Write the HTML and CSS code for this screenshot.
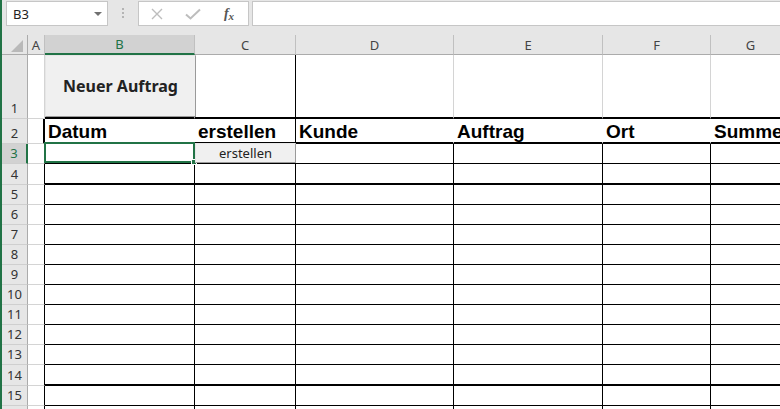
FILE: index.html
```html
<!DOCTYPE html>
<html lang="de">
<head>
    <meta charset="UTF-8">
    <title>Aufträge</title>
    <link rel="stylesheet" href="styles.css">
</head>
<body>
<div class="excel">

    <!-- Name box + formula bar -->
    <div class="formula-bar">
        <div class="name-box">
            <span>B3</span>
            <span class="dropdown"></span>
        </div>
        <div class="grip">
            <svg width="3" height="11" viewBox="0 0 3 11"><rect x="0" y="0" width="2" height="2"/><rect x="0" y="4" width="2" height="2"/><rect x="0" y="8" width="2" height="2"/></svg>
        </div>
        <div class="fx-box">
            <span class="fx-btn">
                <svg width="12" height="12" viewBox="0 0 12 12"><path d="M1 1 L11 11 M11 1 L1 11" stroke="#bdbdbd" stroke-width="1.4" fill="none"/></svg>
            </span>
            <span class="fx-btn">
                <svg width="16" height="12" viewBox="0 0 16 12"><path d="M1 6.5 L5.5 10.5 L15 1.5" stroke="#bdbdbd" stroke-width="2" fill="none"/></svg>
            </span>
            <span class="fx-btn fx">f<span class="fx-x">x</span></span>
        </div>
        <div class="formula-input"></div>
    </div>

    <div class="sheet">
        <div class="row col-heads">
            <div class="corner">
                <svg width="12" height="12" viewBox="0 0 12 12"><path d="M0 12 L12 0 L12 12 Z" fill="#b9b9b9"/></svg>
            </div>
            <div>A</div>
            <div class="sel">B</div>
            <div>C</div>
            <div>D</div>
            <div>E</div>
            <div>F</div>
            <div>G</div>
        </div>

        <div class="row r1">
            <div class="rh">1</div>
            <div class="a"></div>
            <div class="c"><button class="form-btn big">Neuer Auftrag</button></div>
            <div class="c edge"></div>
            <div class="c"></div>
            <div class="c"></div>
            <div class="c"></div>
            <div class="c"></div>
        </div>

        <div class="row r2">
            <div class="rh">2</div>
            <div class="a"></div>
            <div class="c">Datum</div>
            <div class="c edge">erstellen</div>
            <div class="c">Kunde</div>
            <div class="c">Auftrag</div>
            <div class="c">Ort</div>
            <div class="c">Summe</div>
        </div>

        <div class="row tbl">
            <div class="rh sel">3</div>
            <div class="a"></div>
            <div class="c"><div class="sel-box"></div></div>
            <div class="c"><button class="form-btn small">erstellen</button></div>
            <div class="c"></div>
            <div class="c"></div>
            <div class="c"></div>
            <div class="c"></div>
        </div>

        <div class="row tbl thick">
            <div class="rh">4</div><div class="a"></div>
            <div class="c"></div><div class="c"></div><div class="c"></div><div class="c"></div><div class="c"></div><div class="c"></div>
        </div>
        <div class="row tbl">
            <div class="rh">5</div><div class="a"></div>
            <div class="c"></div><div class="c"></div><div class="c"></div><div class="c"></div><div class="c"></div><div class="c"></div>
        </div>
        <div class="row tbl">
            <div class="rh">6</div><div class="a"></div>
            <div class="c"></div><div class="c"></div><div class="c"></div><div class="c"></div><div class="c"></div><div class="c"></div>
        </div>
        <div class="row tbl">
            <div class="rh">7</div><div class="a"></div>
            <div class="c"></div><div class="c"></div><div class="c"></div><div class="c"></div><div class="c"></div><div class="c"></div>
        </div>
        <div class="row tbl">
            <div class="rh">8</div><div class="a"></div>
            <div class="c"></div><div class="c"></div><div class="c"></div><div class="c"></div><div class="c"></div><div class="c"></div>
        </div>
        <div class="row tbl">
            <div class="rh">9</div><div class="a"></div>
            <div class="c"></div><div class="c"></div><div class="c"></div><div class="c"></div><div class="c"></div><div class="c"></div>
        </div>
        <div class="row tbl">
            <div class="rh">10</div><div class="a"></div>
            <div class="c"></div><div class="c"></div><div class="c"></div><div class="c"></div><div class="c"></div><div class="c"></div>
        </div>
        <div class="row tbl">
            <div class="rh">11</div><div class="a"></div>
            <div class="c"></div><div class="c"></div><div class="c"></div><div class="c"></div><div class="c"></div><div class="c"></div>
        </div>
        <div class="row tbl">
            <div class="rh">12</div><div class="a"></div>
            <div class="c"></div><div class="c"></div><div class="c"></div><div class="c"></div><div class="c"></div><div class="c"></div>
        </div>
        <div class="row tbl">
            <div class="rh">13</div><div class="a"></div>
            <div class="c"></div><div class="c"></div><div class="c"></div><div class="c"></div><div class="c"></div><div class="c"></div>
        </div>
        <div class="row tbl thick">
            <div class="rh">14</div><div class="a"></div>
            <div class="c"></div><div class="c"></div><div class="c"></div><div class="c"></div><div class="c"></div><div class="c"></div>
        </div>
        <div class="row tbl">
            <div class="rh">15</div><div class="a"></div>
            <div class="c"></div><div class="c"></div><div class="c"></div><div class="c"></div><div class="c"></div><div class="c"></div>
        </div>
        <!-- row 16 only peeks in at the bottom edge -->
        <div class="row tbl">
            <div class="rh"></div><div class="a"></div>
            <div class="c"></div><div class="c"></div><div class="c"></div><div class="c"></div><div class="c"></div><div class="c"></div>
        </div>
    </div>
</div>
</body>
</html>
```

FILE: styles.css
```css
body {
    margin: 0;
    font-family: "Noto Sans", "Open Sans", sans-serif;
    color: #333;
}

.excel {
    width: 780px;
    height: 409px;
    overflow: hidden;
    background-color: #e6e6e6;
    border-left: 2px solid #217346;
    box-sizing: border-box;
}

/* Formula bar */
.formula-bar {
    height: 35px;
    padding-top: 1px;
    box-sizing: border-box;
    display: flex;
    align-items: flex-start;
}

.name-box {
    margin-left: 4px;
    width: 102px;
    height: 25px;
    box-sizing: border-box;
    border: 1px solid #c6c6c6;
    background-color: #fff;
    display: flex;
    align-items: center;
    justify-content: space-between;
    padding: 0 5px 0 6px;
    font-size: 13px;
    color: #222;
}

.dropdown {
    width: 0;
    height: 0;
    border-left: 4px solid transparent;
    border-right: 4px solid transparent;
    border-top: 4px solid #707070;
}

.grip {
    width: 30px;
    height: 25px;
    display: flex;
    align-items: center;
    justify-content: center;
    fill: #b4b4b4;
}

.fx-box {
    width: 111px;
    height: 25px;
    box-sizing: border-box;
    border: 1px solid #c6c6c6;
    background-color: #fff;
    display: flex;
}

.fx-btn {
    width: 36px;
    display: flex;
    align-items: center;
    justify-content: center;
}

.fx {
    font-family: "Liberation Serif", serif;
    font-style: italic;
    font-weight: bold;
    font-size: 14px;
    color: #555;
}

.fx-x {
    font-size: 11px;
    position: relative;
    top: 2px;
}

.formula-input {
    flex: 1;
    margin-left: 3px;
    height: 25px;
    box-sizing: border-box;
    border: 1px solid #c6c6c6;
    border-right: none;
    background-color: #fff;
}

/* Grid */
.row {
    display: grid;
    grid-template-columns: 26px 17px 150px 101px 158px 149px 108px 80px;
    height: 20px;
}

.row > div {
    box-sizing: border-box;
    border-right: 1px solid #d4d4d4;
    border-bottom: 1px solid #d4d4d4;
    background-color: #fff;
    position: relative;
    white-space: nowrap;
}

.col-heads > div {
    background-color: #e6e6e6;
    border-right-color: #c0c0c0;
    border-bottom-color: #ababab;
    font-size: 13px;
    color: #444;
    display: flex;
    align-items: center;
    justify-content: center;
}

.col-heads > .corner {
    border-right-color: #ababab;
    justify-content: flex-end;
    align-items: flex-end;
    padding: 0 4px 2px 0;
}

.col-heads > .sel {
    background-color: #d2d2d2;
    color: #217346;
    border-bottom: 2px solid #217346;
}

.row > .rh {
    background-color: #e6e6e6;
    border-right-color: #ababab;
    border-bottom-color: #cfcfcf;
    font-size: 13px;
    line-height: 13px;
    color: #333;
    display: flex;
    align-items: flex-end;
    justify-content: center;
    padding-bottom: 3px;
}

.row > .rh.sel {
    background-color: #d2d2d2;
    color: #217346;
    border-right: 2px solid #217346;
}

/* Row heights */
.r1 { height: 64px; }
.r2 { height: 25px; }
.thick { height: 21px; }

/* Table borders */
.r1 > .c { border-bottom: 2px solid #000; }
.r1 > .edge { border-right-color: #000; }

.r2 > .a { border-right: 2px solid #000; }
.r2 > .c {
    border-bottom: 2px solid #000;
    border-right-color: #fff;
    font-family: "Liberation Sans", Arial, sans-serif;
    font-weight: bold;
    font-size: 19px;
    line-height: 19px;
    color: #000;
    display: flex;
    align-items: flex-end;
    padding: 0 0 1px 3px;
}
.r2 > .edge { border-right-color: #000; }

.tbl > .a { border-right-color: #000; }
.tbl > .c {
    border-right-color: #000;
    border-bottom-color: #000;
}
.tbl.thick > .c { border-bottom-width: 2px; }

/* Form buttons lying over cells */
.form-btn {
    position: absolute;
    left: 0;
    margin: 0;
    padding: 0;
    box-sizing: border-box;
    background-color: #f0f0f0;
    border: 1px solid;
    border-color: #e6e6e6 #9a9a9a #9a9a9a #e6e6e6;
    font-family: "Noto Sans", "Open Sans", sans-serif;
    color: #222;
    z-index: 2;
}

.form-btn.big {
    top: 0;
    width: 151px;
    height: 62px;
    font-size: 16px;
    font-weight: bold;
}

.form-btn.small {
    top: -1px;
    width: 101px;
    height: 20px;
    font-size: 13px;
    line-height: 16px;
}

/* Active cell */
.sel-box {
    position: absolute;
    left: -1px;
    top: -2px;
    right: -1px;
    bottom: 0;
    border: 2px solid #217346;
    z-index: 1;
}

.sel-box::after {
    content: "";
    position: absolute;
    right: -4px;
    bottom: -4px;
    width: 4px;
    height: 4px;
    background-color: #217346;
    border: 1px solid #fff;
    z-index: 3;
}
```
